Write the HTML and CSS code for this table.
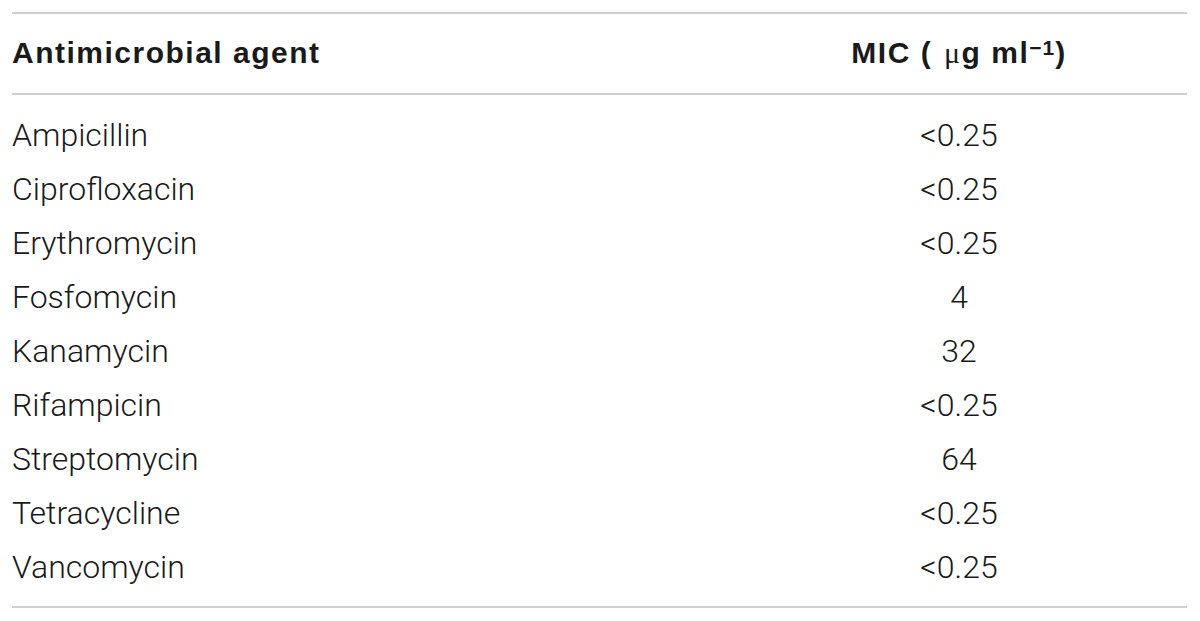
FILE: index.html
```html
<!DOCTYPE html>
<html lang="en">
<head>
<meta charset="utf-8">
<title>MIC table</title>
<link rel="stylesheet" href="styles.css">
</head>
<body>
<div class="wrap">
<table class="mic">
  <colgroup><col class="c1"><col class="c2"></colgroup>
  <thead>
    <tr><th class="agent">Antimicrobial agent</th><th class="val">MIC ( <span class="mu">μ</span>g ml<sup>−1</sup>)</th></tr>
  </thead>
  <tbody>
    <tr><td>Ampicillin</td><td class="val">&lt;0.25</td></tr>
    <tr><td>Ciprofloxacin</td><td class="val">&lt;0.25</td></tr>
    <tr><td>Erythromycin</td><td class="val">&lt;0.25</td></tr>
    <tr><td>Fosfomycin</td><td class="val">4</td></tr>
    <tr><td>Kanamycin</td><td class="val">32</td></tr>
    <tr><td>Rifampicin</td><td class="val">&lt;0.25</td></tr>
    <tr><td>Streptomycin</td><td class="val">64</td></tr>
    <tr><td>Tetracycline</td><td class="val">&lt;0.25</td></tr>
    <tr><td>Vancomycin</td><td class="val">&lt;0.25</td></tr>
  </tbody>
</table>
</div>
</body>
</html>
```
FILE: styles.css
```css
html, body {
  margin: 0;
  padding: 0;
  background: #ffffff;
}
.wrap {
  padding: 12px 13px 0 12px;
}
.mic {
  width: 1175px;
  border-collapse: collapse;
  table-layout: fixed;
  color: #1f1f1f;
}
.c1 { width: 719px; }
.c2 { width: 456px; }
.mic thead tr {
  border-top: 2px solid #cfcfcf;
  border-bottom: 2px solid #cfcfcf;
}
.mic th {
  font-family: "Liberation Sans", Arial, sans-serif;
  font-size: 30px;
  font-weight: bold;
  letter-spacing: 1.5px;
  line-height: 34px;
  padding: 22px 0 23px 0;
  text-align: left;
  color: #1a1a1a;
}
.mic th.val { text-align: center; }
.mu {
  font-family: "Liberation Serif", serif;
  font-weight: normal;
  margin-left: 2px;
}
.mic sup {
  font-size: 21px;
  line-height: 0;
  vertical-align: 8px;
  letter-spacing: 1px;
}
.mic td {
  font-family: "Roboto", "Liberation Sans", sans-serif;
  font-weight: 300;
  font-size: 32px;
  line-height: 54px;
  padding: 0;
  text-align: left;
  color: #1a1a1a;
}
.mic td.val { text-align: center; }
.mic tbody tr:first-child td { padding-top: 13px; }
.mic tbody tr:last-child td { padding-bottom: 12px; }
.mic tbody tr:last-child { border-bottom: 2px solid #cfcfcf; }
```
